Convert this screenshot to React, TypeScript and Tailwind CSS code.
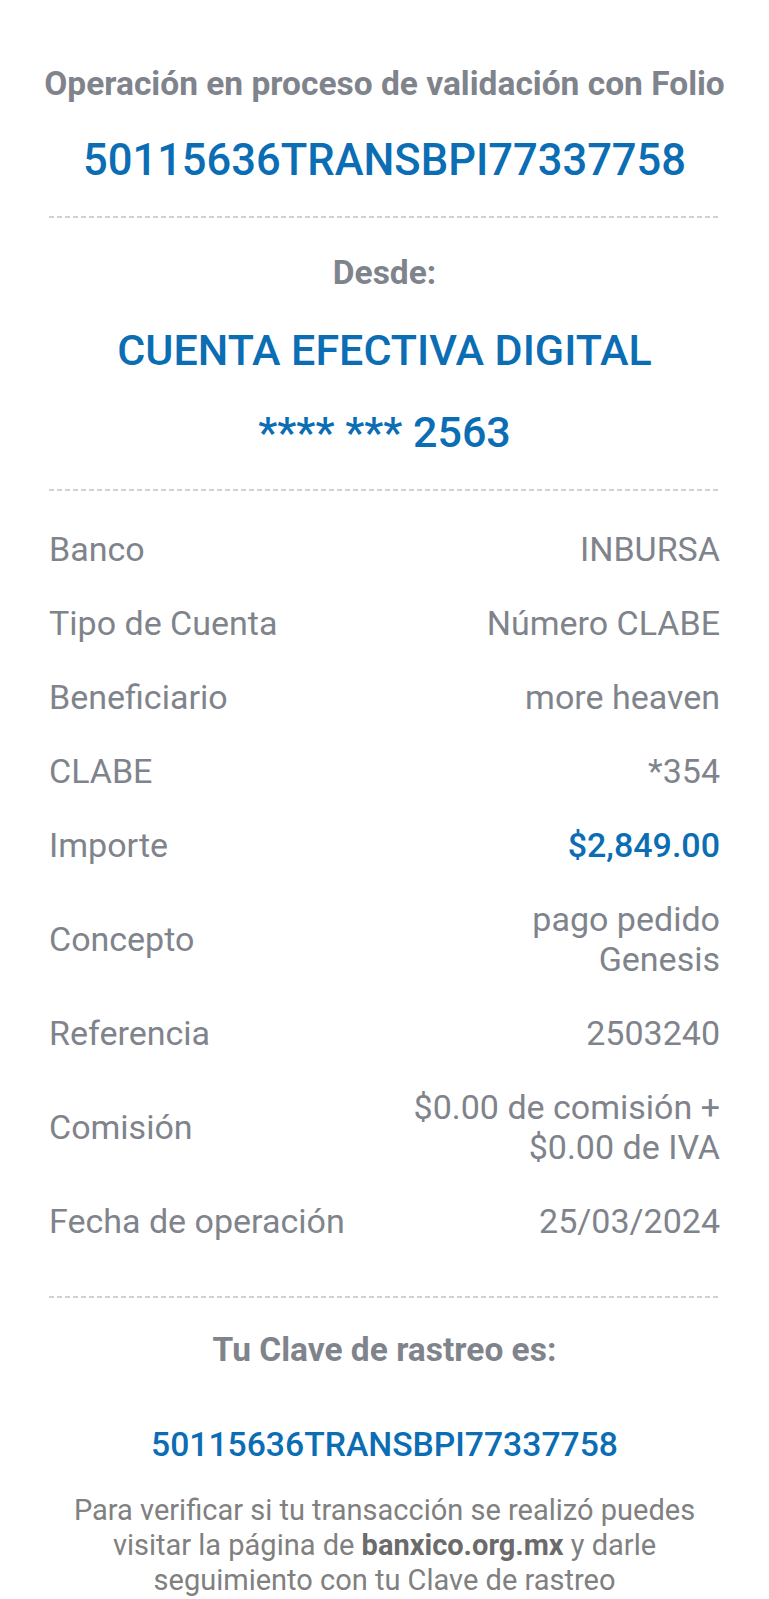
import React from 'react';

const rows: { label: string; value: string[]; blue?: boolean }[] = [
  { label: 'Banco', value: ['INBURSA'] },
  { label: 'Tipo de Cuenta', value: ['Número CLABE'] },
  { label: 'Beneficiario', value: ['more heaven'] },
  { label: 'CLABE', value: ['*354'] },
  { label: 'Importe', value: ['$2,849.00'], blue: true },
  { label: 'Concepto', value: ['pago pedido', 'Genesis'] },
  { label: 'Referencia', value: ['2503240'] },
  { label: 'Comisión', value: ['$0.00 de comisión +', '$0.00 de IVA'] },
  { label: 'Fecha de operación', value: ['25/03/2024'] },
];

const Divider = () => (
  <div className="h-[2px] w-full bg-[repeating-linear-gradient(to_right,#cfd1d4_0_5px,transparent_5px_8px)]" />
);

const App = () => {
  return (
    <div className="min-h-screen bg-white font-[Roboto,sans-serif] text-[#7f848c]">
      <div className="flex flex-col items-center px-[49px] pt-[64px] pb-[10px]">
        <h1 className="text-[33.5px] leading-[40px] font-bold text-center whitespace-nowrap">
          Operación en proceso de validación con Folio
        </h1>
        <div className="mt-[33px] text-[43.5px] leading-[48px] font-medium text-[#0b6db3]">
          50115636TRANSBPI77337758
        </div>

        <div className="mt-[31px] w-full">
          <Divider />
        </div>

        <div className="mt-[35px] text-[33.5px] leading-[40px] font-bold">Desde:</div>
        <div className="mt-[33px] text-[43px] leading-[48px] font-medium text-[#0b6db3]">
          CUENTA EFECTIVA DIGITAL
        </div>
        <div className="mt-[32px] text-[43px] leading-[52px] font-medium text-[#0b6db3]">
          **** *** 2563
        </div>

        <div className="mt-[31px] w-full">
          <Divider />
        </div>

        {/* detalle de la operacion */}
        <div className="mt-[38px] w-full flex flex-col gap-[34px]">
          {rows.map((row) => (
            <div key={row.label} className="flex justify-between items-center text-[34px] leading-[40px]">
              <span>{row.label}</span>
              <div className={row.blue ? 'text-right font-medium text-[#0b6db3]' : 'text-right'}>
                {row.value.map((line) => (
                  <div key={line}>{line}</div>
                ))}
              </div>
            </div>
          ))}
        </div>

        <div className="mt-[55px] w-full">
          <Divider />
        </div>

        <div className="mt-[32px] text-[33.5px] leading-[40px] font-bold">Tu Clave de rastreo es:</div>
        <div className="mt-[55px] text-[33.7px] leading-[40px] font-medium text-[#0b6db3]">
          50115636TRANSBPI77337758
        </div>
        <p className="mt-[28px] text-[29px] leading-[35px] text-center text-[#808080]">
          Para verificar si tu transacción se realizó puedes
          <br />
          visitar la página de <span className="font-bold text-[#6b6b6b]">banxico.org.mx</span> y darle
          <br />
          seguimiento con tu Clave de rastreo
        </p>
      </div>
    </div>
  );
};

export default App;
